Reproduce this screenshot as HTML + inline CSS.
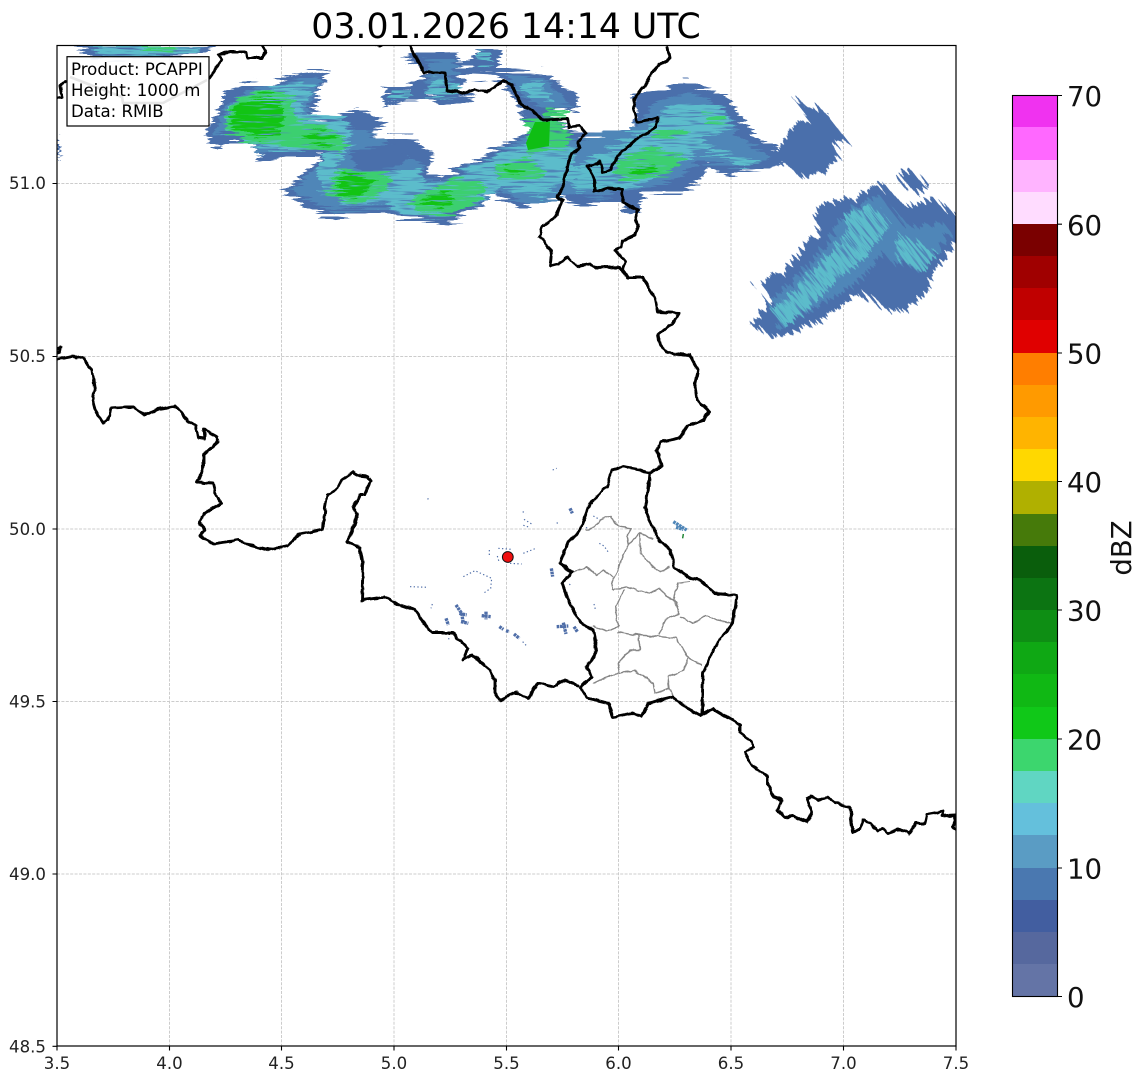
<!DOCTYPE html>
<html><head><meta charset="utf-8"><style>
html,body{margin:0;padding:0;background:#fff;width:1145px;height:1084px;overflow:hidden}
svg{display:block}
text{font-family:"DejaVu Sans","Liberation Sans",sans-serif;fill:#000}
.t{font-size:16.6px;fill:#222}
.c{font-size:27.6px;fill:#111}
</style></head><body>
<svg width="1145" height="1084" viewBox="0 0 1145 1084" xmlns="http://www.w3.org/2000/svg">
<defs>
<clipPath id="ax"><rect x="57" y="45" width="899" height="1001"/></clipPath>
<filter id="h" x="-8%" y="-15%" width="116%" height="130%" color-interpolation-filters="sRGB">
<feTurbulence type="fractalNoise" baseFrequency="0.014 0.36" numOctaves="2" seed="4"/>
<feDisplacementMap in="SourceGraphic" scale="20" xChannelSelector="R" yChannelSelector="A"/>
</filter>
<filter id="hc" x="-8%" y="-15%" width="116%" height="130%" color-interpolation-filters="sRGB">
<feTurbulence type="fractalNoise" baseFrequency="0.014 0.36" numOctaves="2" seed="4" result="n1"/>
<feDisplacementMap in="SourceGraphic" in2="n1" scale="20" xChannelSelector="R" yChannelSelector="A" result="d"/>
<feTurbulence type="fractalNoise" baseFrequency="0.035 0.55" numOctaves="2" seed="13"/>
<feColorMatrix type="matrix" values="0 0 0 0 0 0 0 0 0 0 0 0 0 0 0 7 0 0 0 -2.3" result="m"/>
<feComposite in="d" in2="m" operator="in"/>
</filter>
<filter id="hg" x="-8%" y="-15%" width="116%" height="130%" color-interpolation-filters="sRGB">
<feTurbulence type="fractalNoise" baseFrequency="0.014 0.36" numOctaves="2" seed="4" result="n1"/>
<feDisplacementMap in="SourceGraphic" in2="n1" scale="20" xChannelSelector="R" yChannelSelector="A" result="d"/>
<feTurbulence type="fractalNoise" baseFrequency="0.035 0.55" numOctaves="2" seed="21"/>
<feColorMatrix type="matrix" values="0 0 0 0 0 0 0 0 0 0 0 0 0 0 0 7 0 0 0 -1.9" result="m"/>
<feComposite in="d" in2="m" operator="in"/>
</filter>
<filter id="w" x="-5%" y="-5%" width="110%" height="110%">
<feTurbulence type="fractalNoise" baseFrequency="0.11" numOctaves="2" seed="7"/>
<feDisplacementMap in="SourceGraphic" scale="4" xChannelSelector="R" yChannelSelector="G"/>
</filter>
</defs>
<rect width="1145" height="1084" fill="#fff"/>

<!-- grid -->
<g stroke="#cccccc" stroke-width="1" stroke-dasharray="3 1.4" fill="none">
<path d="M169.5 45V1046M281.5 45V1046M394 45V1046M506.5 45V1046M618.5 45V1046M731 45V1046M843.5 45V1046"/>
<path d="M57 183.5H956M57 356.5H956M57 529H956M57 701.5H956M57 874H956"/>
</g>

<g clip-path="url(#ax)">
<!-- radar: band -->
<g filter="url(#h)">
<polygon fill="#4a6fab" points="74,45 222,45 204,51 178,58 120,60 92,58"/>
<polygon fill="#4a6fab" points="57,140 61,145 58,150 60,156 57,160"/>
<polygon fill="#4a6fab" points="402,62 420,53 457,52 458,63 470,63 476,47 492,47 502,53 497,68 545,72 563,87 578,93 575,112 557,108 543,120 520,112 505,85 495,75 470,74 460,80 458,90 476,98 462,102 440,105 428,97 384,105 383,90 410,86 425,75 418,65"/>
<polygon fill="#4a6fab" points="205,135 223,103 223,93 247,83 270,87 290,75 327,70 328,78 313,95 320,103 303,120 333,117 357,107 380,120 390,125 367,137 410,140 433,153 427,173 443,177 493,150 517,137 527,127 520,113 555,118 570,130 597,137 610,133 628,138 632,127 637,113 632,93 640,93 660,90 683,80 713,90 733,100 740,117 760,140 777,147 780,165 760,170 740,172 730,177 707,167 700,183 677,193 643,192 640,210 628,215 620,203 583,205 567,203 563,190 547,197 523,208 500,197 493,190 480,210 447,223 400,220 383,210 333,217 303,207 283,190 317,163 320,157 283,157 257,162 267,150 253,147 237,140 217,150"/>
<polygon fill="#4f86b8" points="212,135 228,105 250,90 300,80 322,76 305,118 340,122 362,130 400,150 425,165 420,180 445,180 500,152 530,132 575,140 630,130 655,105 690,92 725,108 738,135 770,158 735,168 700,160 670,185 640,188 600,200 570,195 530,204 500,190 480,205 445,218 402,215 385,205 335,212 308,202 290,188 322,165 330,148 285,150 260,155 240,132"/>
<polygon fill="#4f86b8" points="425,60 455,58 456,75 440,90 425,85 430,72"/>
<polygon fill="#4f86b8" points="505,75 545,78 562,95 570,105 540,108 525,100"/>
</g>
<g filter="url(#hc)">
<polygon fill="#5cbccb" points="88,45 205,45 185,56 104,57"/>
<polygon fill="#5cbccb" points="476,50 490,52 492,64 476,62"/>
<polygon fill="#5cbccb" points="437,78 452,82 470,96 440,100 424,93"/>
<polygon fill="#5cbccb" points="390,92 412,90 412,98 392,100"/>
<polygon fill="#5cbccb" points="520,85 545,85 552,100 530,98"/>
<polygon fill="#5cbccb" points="222,132 232,103 275,86 300,83 314,88 300,115 345,116 352,140 345,155 335,165 340,178 420,168 425,185 445,182 500,153 540,138 575,148 572,180 540,197 500,187 480,202 445,217 400,214 388,202 350,207 320,192 316,170 325,150 290,150 260,150 240,137"/>
<polygon fill="#5cbccb" points="570,170 605,150 645,130 662,112 690,103 724,106 732,128 702,140 730,155 760,160 745,167 700,150 680,162 650,182 620,188 590,192 575,192"/>
</g>
<g filter="url(#h)"><polygon fill="#4a6fab" points="350,154 385,143 415,152 395,166 358,170"/></g>
<g filter="url(#hg)">
<polygon fill="#3ccf70" points="140,45 178,45 170,50 146,50"/>
<polygon fill="#3ccf70" points="222,130 235,100 270,90 292,98 296,120 330,128 348,140 340,155 320,150 300,148 270,145 240,138"/>
<polygon fill="#3ccf70" points="325,190 340,170 385,172 390,190 360,205 335,200"/>
<polygon fill="#3ccf70" points="410,200 455,176 485,180 482,200 455,216 418,212"/>
<polygon fill="#3ccf70" points="496,166 530,160 545,176 520,184 498,178"/>
<polygon fill="#3ccf70" points="525,122 555,118 570,135 568,148 530,155"/>
<polygon fill="#3ccf70" points="543,107 567,111 566,118 544,116"/>
<polygon fill="#3ccf70" points="615,165 650,145 685,155 672,172 640,180 620,178"/>
<polygon fill="#3ccf70" points="652,132 680,128 690,136 660,140"/>
<polygon fill="#3ccf70" points="703,113 725,116 728,124 708,122"/>
<polygon fill="#12c414" points="228,127 238,103 267,95 281,100 284,118 278,134 258,138 238,129"/>
<polygon fill="#12c414" points="300,137 323,130 343,137 323,144"/>
<polygon fill="#12c414" points="333,187 347,172 375,180 370,190 350,200"/>
<polygon fill="#12c414" points="420,200 445,190 455,200 440,210"/>
<polygon fill="#12c414" points="503,167 524,170 518,175 506,174"/>
<polygon fill="#12c414" points="630,170 650,163 660,170 640,175"/>
</g>
<polygon fill="#0fbe14" points="535,122 550,122 549,146 528,150 526,143"/>

<!-- right blobs: streaks rotated along radar arcs -->
<g transform="rotate(52 850 250)">
<g filter="url(#h)"><g transform="rotate(-52 850 250)">
<polygon fill="#4a6fab" points="790,96 808,107 825,110 840,130 850,142 833,140 838,157 825,172 807,177 787,167 770,163 778,146 793,127 800,120 810,120"/>
<polygon fill="#4a6fab" points="757,285 770,275 790,267 802,248 820,233 815,213 830,200 853,200 877,185 903,203 913,207 933,197 960,217 960,240 933,270 927,293 900,313 873,303 858,293 820,320 793,333 773,337 750,325 770,303"/>
<polygon fill="#4a6fab" points="898,177 908,168 930,185 920,192 910,190"/>
<polygon fill="#4f86b8" points="770,300 800,275 830,240 850,210 880,195 905,225 940,225 950,235 920,270 880,255 855,285 810,310 780,330"/>
</g></g>
<g filter="url(#hc)"><g transform="rotate(-52 850 250)">
<polygon fill="#5cbccb" points="770,310 795,290 820,262 850,232 880,212 890,226 862,260 835,282 815,302 788,325"/>
<polygon fill="#5cbccb" points="895,235 935,250 925,270 900,260"/>
<polygon fill="#5cbccb" points="845,215 870,205 880,220 855,240"/>
</g></g>
</g>

<!-- speckles (coordinates from 3x crop) -->
<g transform="translate(400 450) scale(.33333)" fill="none" stroke="#4f6ea8" stroke-linecap="butt">
<g stroke-width="10" stroke-dasharray="8 2">
<path d="M168 465L185 490 190 520M178 490L200 495M183 515L205 520"/>
<path d="M138 505L145 525"/>
<path d="M245 497L272 500M258 485L258 508"/>
<path d="M298 530L310 538M318 542L328 545M342 552L358 565"/>
<path d="M470 530L505 528M490 518L498 552"/>
<path d="M522 530L532 545"/>
<path d="M454 355L458 380"/>
<path d="M510 175L517 190"/>
<path d="M820 215L860 240M828 232L850 238" stroke="#4f86b8"/>
</g>
<g stroke-width="3.5" stroke-dasharray="4 7">
<path d="M268 300L268 318M292 318L297 335M330 340L365 342M370 310L405 296M295 295L335 298"/>
<path d="M368 185L378 190M372 208L400 225M370 226L390 232"/>
<path d="M190 380L225 362 275 385 272 415 250 430"/>
<path d="M30 410L85 412M85 145L82 150M458 60L470 55M97 462L93 475M470 218L476 222"/>
<path d="M580 198L605 212M558 232L570 240M598 280L612 288 626 308M508 402L512 406M582 462L586 478"/>
<path d="M368 575L382 590M145 565L150 570"/>
</g>
<path d="M850 252L848 265" stroke="#0a7a20" stroke-width="4"/>
</g>

<!-- Luxembourg cantons -->
<g filter="url(#w)">
<g transform="translate(400 450) scale(.33333)" fill="none" stroke="#868686" stroke-width="4.2" stroke-linejoin="round">
<path d="M555 240L585 232 600 210 630 198 660 230 695 235 680 260 685 285 660 340 650 370 635 400 640 420 680 410 710 420 745 430 780 415 800 440 820 450 835 400 870 395"/>
<path d="M520 367L560 350 590 378 610 360 640 382"/>
<path d="M685 285L720 250 760 265M720 250L720 310 780 367 810 350"/>
<path d="M672 420L650 470 645 490 655 530 620 545 580 530"/>
<path d="M820 450L840 490 800 505 775 555M840 500L880 520 920 495 950 510 1000 520"/>
<path d="M655 545L715 555 780 560 830 565 860 620 905 645"/>
<path d="M715 555L720 600 690 600 655 640 660 670 700 660 760 700 765 730 810 715 805 680 850 660 865 625"/>
<path d="M660 668L610 685 580 700M810 715L820 740"/>
</g>
</g>

<!-- borders -->
<g filter="url(#w)" fill="none" stroke="#000" stroke-width="2.9" stroke-linejoin="round" stroke-linecap="round">
<path d="M57 98L62 97 60 85 65 82M209 78L222 60 218 55 230 52 247 52 248 58 262 58 265 52 262 45"/>
<path d="M376 45L379 46 382 45"/>
<path d="M57 350L61 347 60 352 57 353"/>
<path d="M411 46L423 72 445 73 447 90 467 93 475 89 487 92 503 81 512 85 520 103 538 115 543 120 567 119 570 127 580 126 586 133 578 142 580 148 572 153 568 163 565 177 563 187 557 197 563 200 555 217 542 227 539 237 552 250 550 266 558 264 568 257 577 266 590 264 597 268 620 267 627 278 643 278 655 297 658 312 679 313 673 323 658 335 660 345 668 353 690 355 698 370 695 385 697 400 710 412 703 420 688 425 680 438 660 442 657 450 662 465 650 473 648 493 645 507 657 537 670 550 675 567 690 578 700 580 715 593 737 595 733 623 715 647 703 673 702 713"/>
<path d="M668 47L670 58 655 68 647 82 635 98 633 107 637 122 658 118 655 128 638 138 620 153 610 170 603 172 600 162 588 167 595 180 595 192 608 188 623 189 622 203 638 210 635 220 638 227 635 235 623 240 622 247 615 250 625 262 623 270 628 278"/>
<path d="M650 473L645 472 640 470 623 467 612 470 607 487 590 503 580 530 568 543 560 563 572 572 562 583 567 597 580 622 593 630 597 650 587 667 592 677 580 687 587 698 608 703 613 717 633 713 642 717 648 703 673 697 687 708 700 715 713 709 740 725 740 733 752 742 753 748 745 752 752 765 768 777 768 785 773 797 782 800 778 810 785 817 793 816 807 822 812 812 807 799 812 797 818 800 827 797 835 803 850 807 853 832 860 828 863 820 870 823 878 832 883 828 888 833 898 829 909 834 917 823 925 823 927 814 943 811 942 816 955 815 953 827 956 830"/>
<path d="M57 359L72 356 75 358 82 357 92 370 95 390 93 402 95 410 103 423 108 420 111 408 127 407 133 407 144 415 160 409 175 406 187 420 195 425 198 437 205 438 204 430 217 437 218 442 203 455 203 470 197 482 213 483 215 493 221 503 205 513 199 523 205 530 200 536 213 544 238 540 250 545 270 550 287 546 300 534 323 529 325 507 327 495 338 488 342 480 353 472 358 475 367 476 371 481 365 495 360 495 353 507 357 514 352 533 347 542 360 547 363 565 362 600 385 597 400 605 415 610 427 627 432 633 453 633 468 648 463 660 472 655 490 670 495 680 495 693 500 700 517 692 528 698 538 683 553 687 565 680 578 685"/>
</g>
<!-- radar marker -->
<circle cx="507.8" cy="557" r="5.4" fill="#f01010" stroke="#111" stroke-width="1"/>
</g>

<!-- axes frame -->
<rect x="57" y="45.5" width="899" height="1000.5" fill="none" stroke="#000" stroke-width="1.2"/>
<g stroke="#000" stroke-width="1.1">
<path d="M57 1046v4.5M169.5 1046v4.5M281.5 1046v4.5M394 1046v4.5M506.5 1046v4.5M618.5 1046v4.5M731 1046v4.5M843.5 1046v4.5M956 1046v4.5"/>
<path d="M57 183.5h-4.5M57 356.5h-4.5M57 529h-4.5M57 701.5h-4.5M57 874h-4.5M57 1046.3h-4.5"/>
</g>

<!-- info box -->
<rect x="67" y="56.7" width="142" height="69.3" fill="#fff" fill-opacity=".9" stroke="#000" stroke-width="1.2"/>
<path d="M70 77L122 97 123 103 163 103 207 80" fill="none" stroke="#e6e6e6" stroke-width="2.6"/>
<text x="71" y="75" font-size="16.6">Product: PCAPPI</text>
<text x="71" y="96" font-size="16.6">Height: 1000 m</text>
<text x="71" y="117" font-size="16.6">Data: RMIB</text>

<!-- ticks labels -->
<g text-anchor="middle">
<text class="t" x="57" y="1069">3.5</text>
<text class="t" x="169.5" y="1069">4.0</text>
<text class="t" x="281.5" y="1069">4.5</text>
<text class="t" x="394" y="1069">5.0</text>
<text class="t" x="506.5" y="1069">5.5</text>
<text class="t" x="618.5" y="1069">6.0</text>
<text class="t" x="731" y="1069">6.5</text>
<text class="t" x="843.5" y="1069">7.0</text>
<text class="t" x="956" y="1069">7.5</text>
</g>
<g text-anchor="end">
<text class="t" x="46" y="189">51.0</text>
<text class="t" x="46" y="362">50.5</text>
<text class="t" x="46" y="535">50.0</text>
<text class="t" x="46" y="707.5">49.5</text>
<text class="t" x="46" y="880">49.0</text>
<text class="t" x="46" y="1052.5">48.5</text>
</g>

<text x="506" y="38" font-size="34.7" text-anchor="middle" fill="#111">03.01.2026 14:14 UTC</text>

<!-- colorbar -->
<g shape-rendering="crispEdges">
<rect x="1012" y="964" width="46" height="33" fill="#6474a6"/>
<rect x="1012" y="932" width="46" height="32" fill="#56689e"/>
<rect x="1012" y="900" width="46" height="32" fill="#425ea0"/>
<rect x="1012" y="868" width="46" height="32" fill="#4a78b0"/>
<rect x="1012" y="835" width="46" height="33" fill="#5a9cc4"/>
<rect x="1012" y="803" width="46" height="32" fill="#64c0dc"/>
<rect x="1012" y="771" width="46" height="32" fill="#60d6c2"/>
<rect x="1012" y="739" width="46" height="32" fill="#3cd66e"/>
<rect x="1012" y="707" width="46" height="32" fill="#10c818"/>
<rect x="1012" y="674" width="46" height="33" fill="#10b814"/>
<rect x="1012" y="642" width="46" height="32" fill="#0fa814"/>
<rect x="1012" y="610" width="46" height="32" fill="#0e8e14"/>
<rect x="1012" y="578" width="46" height="32" fill="#0c7412"/>
<rect x="1012" y="546" width="46" height="32" fill="#0a5e0c"/>
<rect x="1012" y="514" width="46" height="32" fill="#467a0a"/>
<rect x="1012" y="481" width="46" height="33" fill="#b0b000"/>
<rect x="1012" y="449" width="46" height="32" fill="#ffd800"/>
<rect x="1012" y="417" width="46" height="32" fill="#ffb400"/>
<rect x="1012" y="385" width="46" height="32" fill="#ff9a00"/>
<rect x="1012" y="353" width="46" height="32" fill="#ff7e00"/>
<rect x="1012" y="320" width="46" height="33" fill="#e00000"/>
<rect x="1012" y="288" width="46" height="32" fill="#c00000"/>
<rect x="1012" y="256" width="46" height="32" fill="#a00000"/>
<rect x="1012" y="224" width="46" height="32" fill="#7a0000"/>
<rect x="1012" y="192" width="46" height="32" fill="#ffdcff"/>
<rect x="1012" y="160" width="46" height="32" fill="#ffb4ff"/>
<rect x="1012" y="127" width="46" height="33" fill="#ff68ff"/>
<rect x="1012" y="95" width="46" height="32" fill="#f032f0"/>
</g>
<rect x="1012.5" y="95.5" width="45" height="901" fill="none" stroke="#000" stroke-width="1.1"/>
<path d="M1057 95.5h5M1057 224.2h5M1057 353h5M1057 481.5h5M1057 610h5M1057 739h5M1057 868h5M1057 996.5h5" stroke="#000" stroke-width="1.1"/>
<text class="c" x="1067" y="106">70</text>
<text class="c" x="1067" y="235">60</text>
<text class="c" x="1067" y="363.5">50</text>
<text class="c" x="1067" y="492">40</text>
<text class="c" x="1067" y="620.5">30</text>
<text class="c" x="1067" y="749.5">20</text>
<text class="c" x="1067" y="878.5">10</text>
<text class="c" x="1067" y="1007">0</text>
<text class="c" transform="translate(1131 548) rotate(-90)" text-anchor="middle">dBZ</text>
</svg>
</body></html>
